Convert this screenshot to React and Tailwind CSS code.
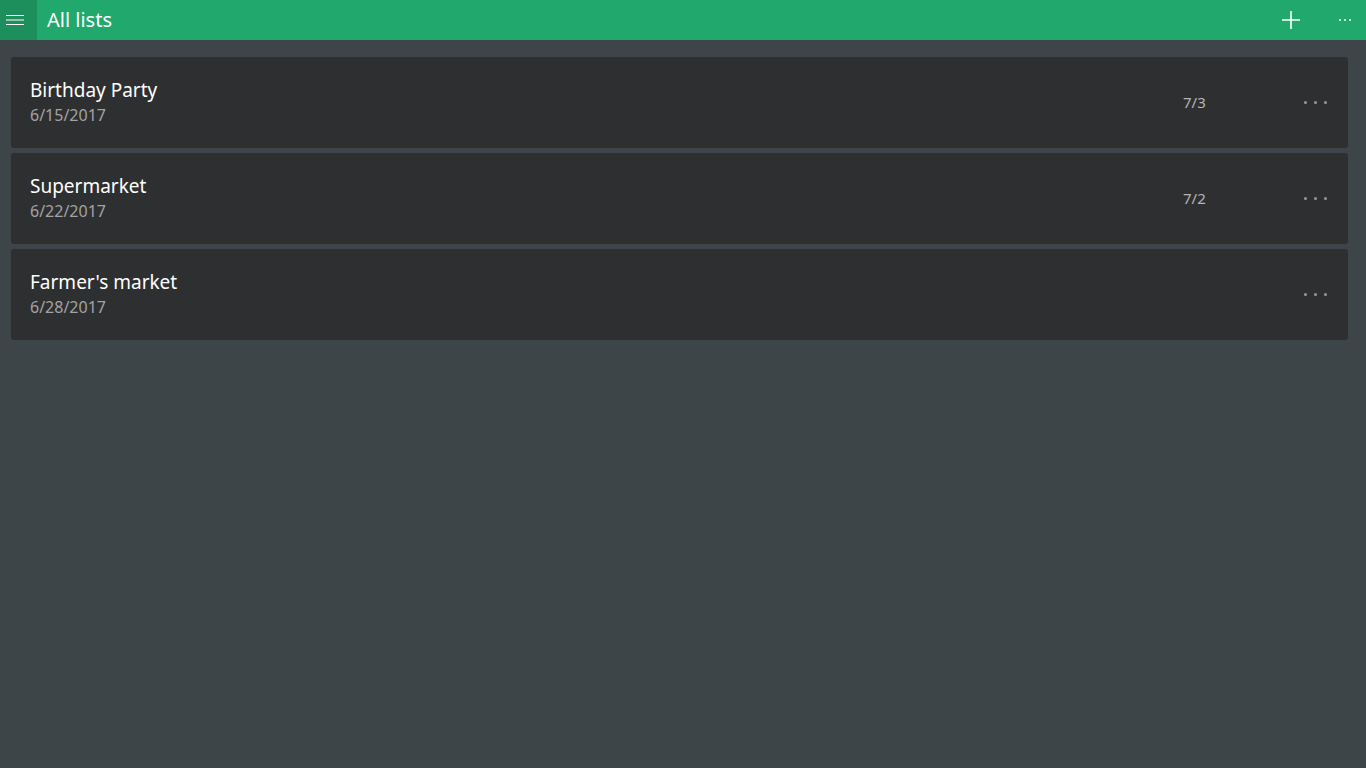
import React from 'react';

const lists = [
    { name: 'Birthday Party', date: '6/15/2017', count: '7/3' },
    { name: 'Supermarket', date: '6/22/2017', count: '7/2' },
    { name: "Farmer's market", date: '6/28/2017', count: '' },
];

function Dots({ size = 3, gap = 'gap-[7px]', color = 'bg-[#9a9a9a]' }) {
    return (
        <div className={`flex items-center ${gap}`}>
            {[0, 1, 2].map((i) => (
                <span key={i} className={`block rounded-full ${color}`} style={{ width: size, height: size }} />
            ))}
        </div>
    );
}

export default function App() {
    return (
        <div className="min-h-[768px] w-full bg-[#3d4548] font-['Noto_Sans','Open_Sans',sans-serif]">
            {/* Top bar */}
            <div className="flex h-10 items-center bg-[#21a86d]">
                <button className="flex h-10 w-[37px] items-center justify-start bg-[#1d8f5d] pl-[6px]">
                    <svg width="18" height="12" viewBox="0 0 18 12" fill="none" stroke="#ffffff" strokeWidth="1.2">
                        <path d="M0 1.5h18M0 6h18M0 10.5h18" />
                    </svg>
                </button>
                <h1 className="ml-[10px] text-[20px] leading-none text-white">All lists</h1>
                <div className="ml-auto flex items-center">
                    <svg width="20" height="20" viewBox="0 0 20 20" fill="none" stroke="#ffffff" strokeWidth="1.6" className="mr-[38px]">
                        <path d="M10 1v18M1 10h18" />
                    </svg>
                    <div className="mr-[15px]">
                        <Dots size={2} gap="gap-[3px]" color="bg-white" />
                    </div>
                </div>
            </div>

            {/* Lists */}
            <div className="flex flex-col gap-[5px] px-[11px] pt-[17px] pr-[18px]">
                {lists.map((list) => (
                    <div key={list.name} className="flex h-[91px] items-center rounded-[3px] bg-[#2e2f31] pl-[19px]">
                        <div className="mb-[2px] flex flex-col">
                            <span className="text-[19px] leading-[26px] text-white">{list.name}</span>
                            <span className="mt-[1px] text-[16px] leading-[22px] text-[#a3a3a3]">{list.date}</span>
                        </div>
                        <span className="ml-auto w-[40px] text-[15px] text-[#b5b5b5]">{list.count}</span>
                        <div className="ml-[81px] mr-[21px]">
                            <Dots />
                        </div>
                    </div>
                ))}
            </div>
        </div>
    );
}
